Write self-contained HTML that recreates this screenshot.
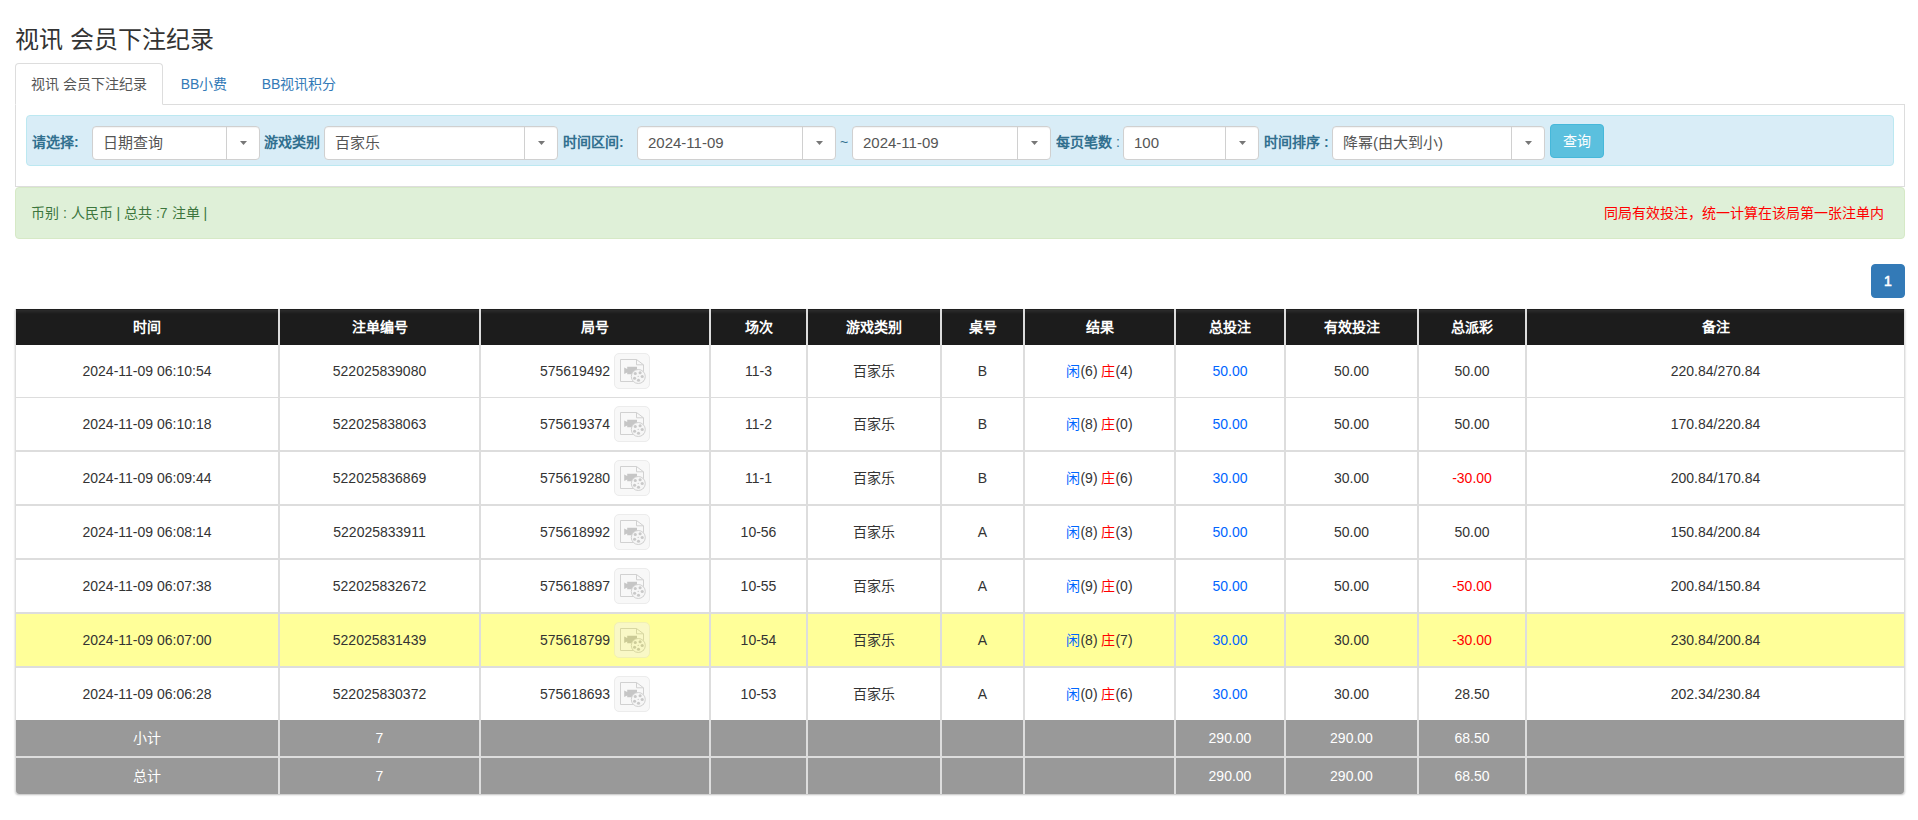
<!DOCTYPE html>
<html lang="zh-CN">
<head>
<meta charset="utf-8">
<title>视讯 会员下注纪录</title>
<style>
*{box-sizing:border-box;}
html,body{margin:0;padding:0;background:#fff;}
body{width:1918px;height:820px;overflow:hidden;position:relative;font-family:"Liberation Sans",sans-serif;font-size:14px;line-height:20px;color:#333;}

/* title */
h3.title{position:absolute;left:15px;top:25px;margin:0;width:400px;height:30px;font-size:24px;line-height:30px;font-weight:normal;color:#333;white-space:nowrap;overflow:hidden;}

/* tabs */
ul.tabs{position:absolute;left:15px;top:63px;width:1890px;height:42px;margin:0;padding:0;list-style:none;border-bottom:1px solid #ddd;}
ul.tabs li{position:absolute;top:0;height:42px;padding:10px 0 0 0;border:1px solid transparent;border-radius:4px 4px 0 0;line-height:20px;color:#337ab7;white-space:nowrap;overflow:hidden;text-align:center;}
ul.tabs li.active{color:#555;background:#fff;border-color:#ddd;border-bottom-color:#fff;}
.tab-content{position:absolute;left:15px;top:105px;width:1890px;height:82px;border:1px solid #ddd;border-top:0;}

/* filter bar */
.filter{position:absolute;left:26px;top:115px;width:1868px;height:51px;background:#d9edf7;border:1px solid #bce8f1;border-radius:4px;color:#31708f;}
.filter label{position:absolute;top:16px;height:20px;line-height:20px;font-weight:bold;margin:0;white-space:nowrap;overflow:hidden;}
.sel{position:absolute;top:10px;height:34px;background:#fff;border:1px solid #d0d0d0;border-radius:4px;color:#555;font-size:15px;line-height:32px;padding-left:10px;white-space:nowrap;overflow:hidden;box-shadow:inset 0 1px 1px rgba(0,0,0,.05);}
.sel i{position:absolute;right:0;top:0;width:33px;height:32px;border-left:1px solid #d0d0d0;}
.sel i:after{content:"";position:absolute;left:13px;top:14px;width:7px;height:4px;background:#777;clip-path:polygon(0 0,100% 0,50% 100%);}
.tilde{position:absolute;top:16px;left:813px;color:#31708f;}
.btn-q{position:absolute;left:1523px;top:8px;width:54px;height:34px;background:#5bc0de;border:1px solid #46b8da;border-radius:4px;color:#fff;text-align:center;line-height:32px;font-size:14px;white-space:nowrap;overflow:hidden;}

/* alert */
.alert{position:absolute;left:15px;top:187px;width:1890px;height:52px;background:#dff0d8;border:1px solid #d6e9c6;border-radius:4px;color:#3c763d;}
.alert .l{position:absolute;left:15px;top:15px;height:20px;white-space:nowrap;overflow:hidden;}
.alert .r{position:absolute;right:20px;top:15px;height:20px;color:#f00;white-space:nowrap;overflow:hidden;text-align:right;}

/* pager */
.pg{position:absolute;left:1871px;top:264px;width:34px;height:34px;background:#337ab7;border:1px solid #337ab7;border-radius:4px;color:#fff;text-align:center;line-height:32px;font-weight:normal;-webkit-text-stroke:.6px #fff;}

/* table */
table.t{position:absolute;left:15px;top:309px;width:1890px;table-layout:fixed;border-collapse:separate;border-spacing:0;border-radius:0 0 4px 4px;box-shadow:0 1px 2px rgba(0,0,0,.25);}
table.t th,table.t td{padding:0;text-align:center;vertical-align:middle;border-left:1px solid #ddd;border-right:1px solid #ddd;white-space:nowrap;overflow:hidden;}
table.t th{height:36px;background:#1c1c1c;background:linear-gradient(#1f1f1f 0,#1f1f1f 1px,#2c2c2c 1px,#1c1c1c 5px);color:#fff;font-weight:bold;font-size:14px;}
table.t td{height:54px;border-bottom:2px solid #ddd;font-size:14px;color:#333;}
table.t tr.r1 td{height:53px;border-bottom:1px solid #ddd;}
table.t tr.r7 td{height:52px;border-bottom:0;}
table.t tr.hl td{background:#ffff99;}
table.t tr.f td{height:38px;background:#999;color:#fff;border-bottom:2px solid #ddd;}
table.t tr.f2 td{height:36px;border-bottom:0;}
table.t tr.f2 td:first-child{border-bottom-left-radius:4px;}
table.t tr.f2 td:last-child{border-bottom-right-radius:4px;}
table.t td.b,.b{color:#06f;}
table.t td.r,.r{color:#f00;}
.vb{display:inline-block;vertical-align:-13px;width:36px;height:36px;border:1px solid #ececec;border-radius:5px;background:#f8f8f8;--ln:#d1d1d1;--cam:#c6c6c6;--reel:#f6f6f6;--hole:#c9c9c9;}
.hl .vb{background:#f9f8c6;border-color:#f1f0b4;--ln:#d8d7a2;--cam:#cbca96;--reel:#f8f7c4;--hole:#cdcc99;}
.vb svg{display:block;width:34px;height:34px;}
</style>
</head>
<body>
<svg width="0" height="0" style="position:absolute;left:-10px;top:-10px">
<symbol id="vid" viewBox="0 0 34 34">
<path d="M5.5 5.5H21.5L28.5 10.8V27.5H5.5Z" style="fill:none;stroke:var(--ln);stroke-width:1"/>
<path d="M21.5 5.5V10.8H28.5" style="fill:none;stroke:var(--ln);stroke-width:1"/>
<path d="M9.2 13.5L12.2 15V12.8H22V20.2H12.2V18.5L9.2 19.9Z" style="fill:var(--cam)"/>
<circle cx="23.3" cy="22.5" r="7" style="fill:var(--reel);stroke:var(--ln);stroke-width:1"/>
<g style="fill:var(--hole)"><circle cx="20.3" cy="19.5" r="1.55"/><circle cx="25.1" cy="18.8" r="1.55"/><circle cx="27.2" cy="22.5" r="1.55"/><circle cx="23.5" cy="26.3" r="1.55"/><circle cx="19.6" cy="24.2" r="1.55"/><circle cx="23.2" cy="22.4" r="0.6"/></g>
</symbol>
</svg>
<h3 class="title">视讯 会员下注纪录</h3>

<ul class="tabs">
  <li class="active" style="left:0;width:148px;">视讯 会员下注纪录</li>
  <li style="left:150px;width:78px;">BB小费</li>
  <li style="left:230px;width:108px;">BB视讯积分</li>
</ul>
<div class="tab-content"></div>

<div class="filter">
  <label style="left:5px;width:52px;">请选择:</label>
  <div class="sel" style="left:65px;width:168px;">日期查询<i></i></div>
  <label style="left:237px;width:58px;">游戏类别</label>
  <div class="sel" style="left:297px;width:234px;">百家乐<i></i></div>
  <label style="left:536px;width:66px;">时间区间:</label>
  <div class="sel" style="left:610px;width:199px;">2024-11-09<i></i></div>
  <span class="tilde">~</span>
  <div class="sel" style="left:825px;width:199px;">2024-11-09<i></i></div>
  <label style="left:1029px;width:66px;">每页笔数 <span style="font-weight:normal">:</span></label>
  <div class="sel" style="left:1096px;width:136px;">100<i></i></div>
  <label style="left:1237px;width:68px;">时间排序 :</label>
  <div class="sel" style="left:1305px;width:213px;">降幂(由大到小)<i></i></div>
  <div class="btn-q">查询</div>
</div>

<div class="alert">
  <div class="l">币别 : 人民币 | 总共 :7 注单 |</div>
  <div class="r">同局有效投注，统一计算在该局第一张注单内</div>
</div>

<div class="pg">1</div>

<table class="t">
<colgroup>
<col style="width:264px"><col style="width:201px"><col style="width:230px"><col style="width:97px"><col style="width:134px"><col style="width:83px"><col style="width:151px"><col style="width:110px"><col style="width:133px"><col style="width:108px"><col style="width:379px">
</colgroup>
<thead>
<tr><th>时间</th><th>注单编号</th><th>局号</th><th>场次</th><th>游戏类别</th><th>桌号</th><th>结果</th><th>总投注</th><th>有效投注</th><th>总派彩</th><th>备注</th></tr>
</thead>
<tbody>
<tr class="r1"><td>2024-11-09 06:10:54</td><td>522025839080</td><td>575619492 <span class="vb"><svg viewBox="0 0 34 34"><use href="#vid"/></svg></span></td><td>11-3</td><td>百家乐</td><td>B</td><td><span class="b">闲</span>(6) <span class="r">庄</span>(4)</td><td class="b">50.00</td><td>50.00</td><td>50.00</td><td>220.84/270.84</td></tr>
<tr class="r2"><td>2024-11-09 06:10:18</td><td>522025838063</td><td>575619374 <span class="vb"><svg viewBox="0 0 34 34"><use href="#vid"/></svg></span></td><td>11-2</td><td>百家乐</td><td>B</td><td><span class="b">闲</span>(8) <span class="r">庄</span>(0)</td><td class="b">50.00</td><td>50.00</td><td>50.00</td><td>170.84/220.84</td></tr>
<tr class="r3"><td>2024-11-09 06:09:44</td><td>522025836869</td><td>575619280 <span class="vb"><svg viewBox="0 0 34 34"><use href="#vid"/></svg></span></td><td>11-1</td><td>百家乐</td><td>B</td><td><span class="b">闲</span>(9) <span class="r">庄</span>(6)</td><td class="b">30.00</td><td>30.00</td><td class="r">-30.00</td><td>200.84/170.84</td></tr>
<tr class="r4"><td>2024-11-09 06:08:14</td><td>522025833911</td><td>575618992 <span class="vb"><svg viewBox="0 0 34 34"><use href="#vid"/></svg></span></td><td>10-56</td><td>百家乐</td><td>A</td><td><span class="b">闲</span>(8) <span class="r">庄</span>(3)</td><td class="b">50.00</td><td>50.00</td><td>50.00</td><td>150.84/200.84</td></tr>
<tr class="r5"><td>2024-11-09 06:07:38</td><td>522025832672</td><td>575618897 <span class="vb"><svg viewBox="0 0 34 34"><use href="#vid"/></svg></span></td><td>10-55</td><td>百家乐</td><td>A</td><td><span class="b">闲</span>(9) <span class="r">庄</span>(0)</td><td class="b">50.00</td><td>50.00</td><td class="r">-50.00</td><td>200.84/150.84</td></tr>
<tr class="r6 hl"><td>2024-11-09 06:07:00</td><td>522025831439</td><td>575618799 <span class="vb"><svg viewBox="0 0 34 34"><use href="#vid"/></svg></span></td><td>10-54</td><td>百家乐</td><td>A</td><td><span class="b">闲</span>(8) <span class="r">庄</span>(7)</td><td class="b">30.00</td><td>30.00</td><td class="r">-30.00</td><td>230.84/200.84</td></tr>
<tr class="r7"><td>2024-11-09 06:06:28</td><td>522025830372</td><td>575618693 <span class="vb"><svg viewBox="0 0 34 34"><use href="#vid"/></svg></span></td><td>10-53</td><td>百家乐</td><td>A</td><td><span class="b">闲</span>(0) <span class="r">庄</span>(6)</td><td class="b">30.00</td><td>30.00</td><td>28.50</td><td>202.34/230.84</td></tr>
<tr class="f f1"><td>小计</td><td>7</td><td></td><td></td><td></td><td></td><td></td><td>290.00</td><td>290.00</td><td>68.50</td><td></td></tr>
<tr class="f f2"><td>总计</td><td>7</td><td></td><td></td><td></td><td></td><td></td><td>290.00</td><td>290.00</td><td>68.50</td><td></td></tr>
</tbody>
</table>
</body>
</html>
